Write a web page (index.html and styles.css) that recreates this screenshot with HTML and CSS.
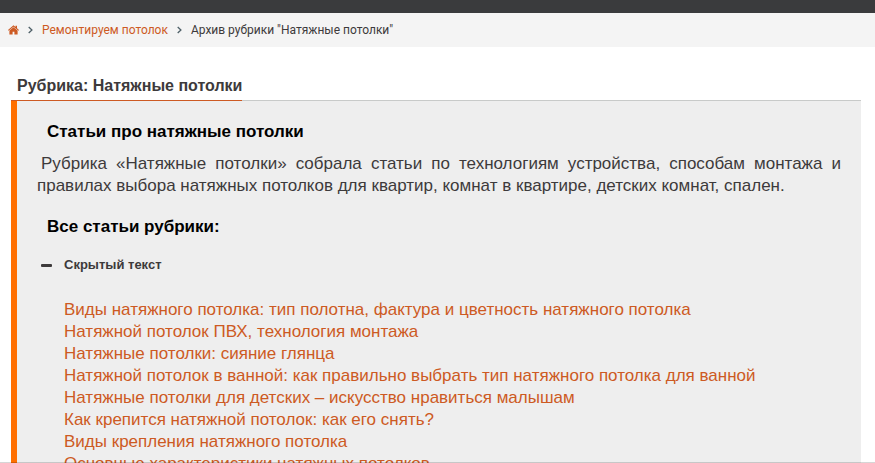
FILE: index.html
```html
<!DOCTYPE html>
<html lang="ru">

<head>
    <meta charset="UTF-8">
    <meta name="viewport" content="width=device-width, initial-scale=1">
    <title>Натяжные потолки</title>
    <link rel="stylesheet" href="styles.css">
</head>

<body>
    <div class="topbar"></div>

    <nav class="breadcrumbs">
        <a class="home" href="#" aria-label="Главная">
            <svg width="11" height="10" viewBox="0 0 11 10">
                <path d="M5.5 0.2 L7.5 1.9 V0.8 H9 V3.2 L11 4.9 L10.4 5.7 L5.5 1.7 L0.6 5.7 L0 4.9 Z" />
                <path d="M5.5 2.2 L9.6 5.6 V9.5 H6.4 V6.8 H4.6 V9.5 H1.4 V5.6 Z" />
            </svg>
        </a>
        <svg class="arrow" width="5" height="8" viewBox="0 0 5 8">
            <path d="M0.7 1 L3.9 4 L0.7 7" />
        </svg>
        <a href="#">Ремонтируем потолок</a>
        <svg class="arrow" width="5" height="8" viewBox="0 0 5 8">
            <path d="M0.7 1 L3.9 4 L0.7 7" />
        </svg>
        <span>Архив рубрики "Натяжные потолки"</span>
    </nav>

    <main class="content">
        <div class="page-title">
            <h1>Рубрика: Натяжные потолки</h1>
        </div>

        <div class="rubric">
            <h2>Статьи про натяжные потолки</h2>
            <p>Рубрика «Натяжные потолки» собрала статьи по технологиям устройства, способам монтажа и правилах выбора натяжных потолков для квартир, комнат в квартире, детских комнат, спален.</p>
            <h2>Все статьи рубрики:</h2>

            <details class="spoiler" open>
                <summary>Скрытый текст</summary>
                <ul>
                    <li><a href="#">Виды натяжного потолка: тип полотна, фактура и цветность натяжного потолка</a></li>
                    <li><a href="#">Натяжной потолок ПВХ, технология монтажа</a></li>
                    <li><a href="#">Натяжные потолки: сияние глянца</a></li>
                    <li><a href="#">Натяжной потолок в ванной: как правильно выбрать тип натяжного потолка для ванной</a></li>
                    <li><a href="#">Натяжные потолки для детских – искусство нравиться малышам</a></li>
                    <li><a href="#">Как крепится натяжной потолок: как его снять?</a></li>
                    <li><a href="#">Виды крепления натяжного потолка</a></li>
                    <li><a href="#">Основные характеристики натяжных потолков</a></li>
                </ul>
            </details>
        </div>
    </main>

    <div class="bottom-line"></div>
</body>

</html>
```
FILE: styles.css
```css
html {
    overflow: hidden;
}

body {
    margin: 0;
    background: #fff;
    color: #3d3a3b;
    font-family: "Liberation Sans", Arial, sans-serif;
    font-size: 17px;
    line-height: 22px;
}

a {
    color: #cd5a23;
    text-decoration: none;
}

.topbar {
    height: 13px;
    background: #3a3b3d;
}

.breadcrumbs {
    display: flex;
    align-items: center;
    gap: 9px;
    padding: 6px 8px;
    background: #f4f4f4;
    font-family: Roboto, sans-serif;
    font-size: 12px;
}

.home svg {
    display: block;
    fill: #cd5a23;
}

.arrow {
    fill: none;
    stroke: #4f6068;
    stroke-width: 1.3;
}

.content {
    padding: 24px 14px 0 11px;
}

.page-title {
    border-bottom: 1px solid #c8cac9;
}

.page-title h1 {
    display: inline-block;
    margin: 0 0 -1px;
    padding: 4px 0 3px 6px;
    border-bottom: 1px solid #cd5a23;
    font-size: 16px;
    vertical-align: top;
}

.rubric {
    padding: 20px;
    border-left: 6px solid #ff6f00;
    background: #eee;
}

.rubric h2 {
    margin: 0 0 10px;
    padding-left: 10px;
    color: #000;
    font-size: 17px;
}

.rubric p {
    margin: 0 0 19px;
    text-align: justify;
    text-indent: 4px;
}

.spoiler {
    padding: 6px 4px;
}

.spoiler summary {
    display: flex;
    align-items: center;
    gap: 12px;
    font-size: 13px;
    font-weight: bold;
    cursor: pointer;
}

.spoiler summary::before {
    content: "";
    width: 11px;
    height: 3px;
    border-radius: 1px;
    background: #3d3a3b;
}

.spoiler ul {
    margin: 0;
    padding: 23px 0 0 23px;
    list-style: none;
}

.bottom-line {
    position: fixed;
    right: 0;
    bottom: 0;
    left: 0;
    height: 1px;
    background: rgba(0, 0, 0, 0.16);
}
```
